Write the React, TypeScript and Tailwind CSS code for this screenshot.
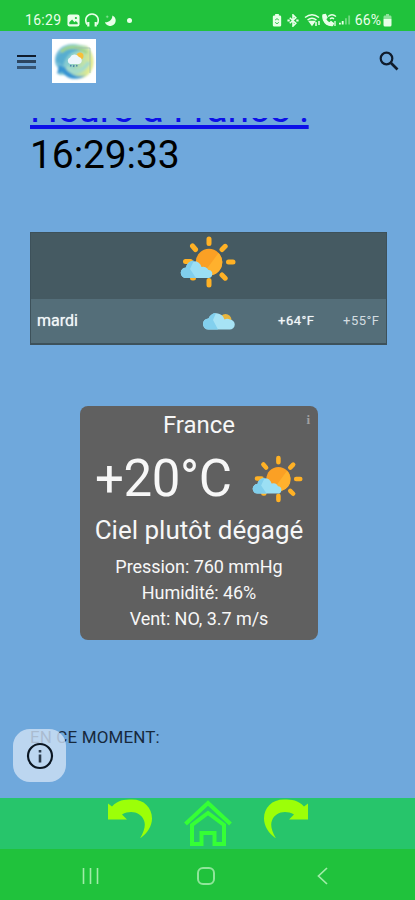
import type { ReactNode } from 'react'

interface IconProps {
  className?: string
}

export default function App() {
  return (
    <div className="flex flex-col w-[415px] h-[900px] overflow-hidden bg-[#6fa8dc] font-['Roboto',sans-serif] text-black">
      <StatusBar />
      <AppHeader />
      <main className="relative h-[680px] shrink-0 overflow-hidden">
        <div className="-mt-[32px] pl-[30px] text-[39px] leading-[46px] whitespace-nowrap">
          <h1 className="w-[280px] tracking-[-0.12px] text-[#0c10e8] underline decoration-[4px] underline-offset-[3px]">
            Heure à France :
          </h1>
          <p className="tracking-[-0.1px]">16:29:33</p>
        </div>
        <ForecastTable />
        <CurrentWeather />
        <p className="mt-[86px] ml-[30px] text-[17px] leading-[22px] tracking-[0.12px] text-[#17293c]">
          EN CE MOMENT:
        </p>
        <button
          className="absolute left-[13px] top-[611px] flex size-[53px] items-center justify-center rounded-[17px] bg-[#cfe1f5]/80"
          aria-label="Info"
        >
          <svg viewBox="0 0 28 28" className="size-[28px]" fill="none" stroke="#0b1622" strokeWidth="2.2">
            <circle cx="14" cy="14" r="12" />
            <path d="M14 12.5v8M14 8v2.4" strokeWidth="2.6" stroke="#2b3b4c" />
          </svg>
        </button>
      </main>
      <Toolbar />
      <SystemNav />
    </div>
  )
}

// ─── Top bars ───────────────────────────────────────────

function StatusBar() {
  return (
    <div className="flex h-[31px] shrink-0 items-center bg-[#20c23c] pt-[9px] pl-[25px] pr-[23px] text-[14px] leading-[22px] text-[#e9ffe9]">
      <span className="w-[42px] tracking-[0.3px]">16:29</span>
      <svg viewBox="0 0 14 14" className="size-[13px]">
        <rect x="0.5" y="0.5" width="13" height="13" rx="2.5" fill="#e9ffe9" />
        <path d="M2.5 11V9l3-3 2.5 3 1.5-1.5 2 2V11z" fill="#20c23c" />
        <circle cx="9.6" cy="4.3" r="1.2" fill="#20c23c" />
      </svg>
      <svg viewBox="0 0 14 14" className="ml-[5px] size-[14px]" fill="none" stroke="#e9ffe9" strokeWidth="1.6">
        <path d="M2 11.5C-1 6 2 1 7 1s8 5 5 10.5" />
        <path d="M3.3 9v4.5M10.7 9v4.5" strokeWidth="2.2" />
      </svg>
      <svg viewBox="0 0 13 13" className="ml-[5px] size-[12px]">
        <path d="M9 1.5a6 6 0 1 1-8 7.500C5 9.500 9.500 6 9 1.5z" fill="#e9ffe9" />
        <path d="M3.5 1.500v3M2 3h3" stroke="#e9ffe9" strokeOpacity="0.4" />
      </svg>
      <span className="ml-[11px] size-[5px] rounded-full bg-[#e9ffe9]" />

      <div className="ml-auto flex items-center">
        <svg viewBox="0 0 10 14" className="h-[13px] w-[10px]">
          <path d="M3 0h4v1.5h1Q9.5 1.5 9.5 3v9Q9.5 13.5 8 13.5H2Q.5 13.5.5 12V3Q.5 1.5 2 1.5h1z" fill="#e9ffe9" />
          <path d="M3 6.500l2-1.500 2 1.500M3 9l2 1.500L7 9" stroke="#20c23c" fill="none" />
        </svg>
        <svg viewBox="0 0 12 14" className="ml-[5px] h-[13px] w-[12px]" fill="none" stroke="#e9ffe9" strokeWidth="1.7">
          <path d="M2.5 4l6.500 6-3 3V1l3 3-6.500 6" />
          <path d="M0 7h2.500M9.500 7h2.500" strokeWidth="2.200" />
        </svg>
        <svg viewBox="0 0 17 14" className="ml-[5px] h-[14px] w-[17px]" fill="none" stroke="#e9ffe9" strokeWidth="1.5">
          <path d="M1 4.500Q8 -1 15 4.500M3.500 7Q8 3.500 12.500 7" />
          <path d="M5.500 8.500h5L8 12z" fill="#e9ffe9" />
          <path d="M12 9v4M15 8v4" />
        </svg>
        <svg viewBox="0 0 15 14" className="ml-[1px] h-[14px] w-[15px]" fill="none" stroke="#e9ffe9" strokeWidth="1.3">
          <path d="M1 2l2.500-.5L5 4.500 3.500 6q1.500 3 4 4l1.500-1.500 2.500 2-1 2Q4 13 1.500 7 .5 4 1 2z" fill="#e9ffe9" />
          <path d="M6 3.500Q10 0 14 3.500M8 6q2-2 4 0M13 8v5" />
        </svg>
        <svg viewBox="0 0 13 12" className="ml-[2px] h-[12px] w-[12px]" fill="#e9ffe9">
          <path d="M0 9h2v2H0zM3 7h2v4H3z" />
          <path d="M6.500 4h2v7h-2zM10 1h2v10h-2z" fillOpacity="0.4" />
        </svg>
        <span className="ml-[4px] tracking-[0.1px]">66%</span>
        <svg viewBox="0 0 9 13" className="ml-[2px] h-[13px] w-[9px]">
          <path d="M3 0h3v1.500h1.500Q8.500 1.500 8.500 3v2H.5V3Q.5 1.500 1.500 1.500H3z" fill="#e9ffe9" fillOpacity="0.55" />
          <path d="M.5 5h8v6q0 1.500-1.500 1.500H2Q.5 12.500.5 11z" fill="#e9ffe9" />
        </svg>
      </div>
    </div>
  )
}

function AppHeader() {
  return (
    <header className="flex h-[87px] shrink-0 items-start pt-[8px] pl-[17px] pr-[16px]">
      <button className="mt-[15px] flex w-[19px] flex-col gap-[3px] pt-px" aria-label="Menu">
        <span className="h-[2px] bg-[#101c2c]" />
        <span className="h-[3px] bg-[#2c4560]" />
        <span className="h-[3px] bg-[#365473]" />
      </button>
      <Logo className="ml-[16px] size-[44px]" />
      <svg viewBox="0 0 20 20" className="mt-[12px] ml-auto size-[20px]" fill="none" stroke="#101c2c">
        <circle cx="7.5" cy="7.5" r="5.800" strokeWidth="2.200" />
        <path d="M12 12l6.500 6.500" strokeWidth="2.600" />
      </svg>
    </header>
  )
}

function Logo({ className }: IconProps) {
  return (
    <svg viewBox="0 0 44 44" className={className}>
      <defs>
        <linearGradient id="swirl" x1="0" y1="0" x2="1" y2="0.2">
          <stop offset="0" stopColor="#4aa5d8" />
          <stop offset="0.5" stopColor="#79c9c4" />
          <stop offset="1" stopColor="#dce77c" />
        </linearGradient>
        <filter id="soft" x="-10%" y="-10%" width="120%" height="120%">
          <feGaussianBlur stdDeviation="1" />
        </filter>
      </defs>
      <rect width="44" height="44" fill="#fff" />
      <g filter="url(#soft)">
        <path d="M3 21C3 11 12 4 23 5l12 2c7 7 9 19 3 27-6 7-16 7-24 2l-7 0-1-7C4 27 3 24 3 21z" fill="url(#swirl)" fillOpacity="0.85" />
        <path d="M4 22C6 12 18 5 33 13 23 10 14 14 11 27z" fill="#4fa9cf" fillOpacity="0.8" />
        <path d="M9 13C15 7 26 6 35 14" stroke="#a2d58a" strokeWidth="3" fill="none" />
        <path d="M5 35l2-9 7 3c5 8 13 10 20 7-8 6-18 5-24-3z" fill="#3794d2" />
        <path d="M15 28c5 7 15 6 22-5" stroke="#a5dccb" strokeWidth="4" fill="none" />
      </g>
      <path d="M22 9h16v25" fill="none" stroke="#9ebcaf" strokeWidth="0.7" />
      <circle cx="28" cy="17" r="3.500" fill="#f7bf38" />
      <path d="M18 25a3.500 3.500 0 0 1 0-6.500 5 5 0 0 1 9-.5 3.600 3.600 0 0 1 0 7z" fill="#edf6fc" />
      <path d="M19 26l-.5 1.500M22 26l-.5 2M25 26l-.5 1.500" stroke="#4a80a4" strokeWidth="1.400" />
    </svg>
  )
}

// ─── Weather ────────────────────────────────────────────

function ForecastTable() {
  return (
    <section className="mt-[54px] ml-[30px] h-[113px] w-[357px] border border-[#3d515a] border-b-2 bg-[#455a62] text-[#f2f7f8]">
      <div className="flex h-[66px] items-center justify-center">
        <PartlySunny className="-mt-[8px] -ml-[2px] h-[52px] w-[56px]" />
      </div>
      <div className="grid h-[44px] grid-cols-[172px_69px_65px_1fr] items-center bg-[#546e79] pl-[6px] text-[13px]">
        <span className="text-[16px] [text-shadow:0_0_1px_#cfdcdf]">mardi</span>
        <MostlyCloudy className="ml-[-6px] h-[18px] w-[32px]" />
        <span className="tracking-[0.5px] [text-shadow:0_0_1px_#cfdcdf]">+64°F</span>
        <span className="tracking-[0.5px] text-[#d3dde1]">+55°F</span>
      </div>
    </section>
  )
}

function CurrentWeather() {
  return (
    <section className="mt-[61px] ml-[80px] flex h-[234px] w-[238px] flex-col rounded-[8px] bg-[#606060] text-center text-[#f7f7f7]">
      <div className="relative h-[38px] text-[24px] leading-[38px]">
        France
        <span className="absolute right-[8px] top-[6px] font-['Liberation_Serif',serif] text-[13px] leading-[16px] font-bold text-[#a0a0a0]">
          i
        </span>
      </div>
      <div className="flex h-[70px] items-center justify-between pl-[15px] pr-[15px]">
        <span className="text-[51px] leading-[70px] tracking-[-0.4px]">+20°C</span>
        <PartlySunny className="h-[48px] w-[51px]" />
      </div>
      <p className="h-[40px] text-[26px] leading-[32px] whitespace-nowrap">Ciel plutôt dégagé</p>
      <div className="text-[18px] leading-[26px]">
        <Detail>Pression: 760 mmHg</Detail>
        <Detail>Humidité: 46%</Detail>
        <Detail>Vent: NO, 3.7 m/s</Detail>
      </div>
    </section>
  )
}

function Detail({ children }: { children: ReactNode }) {
  return <p className="whitespace-nowrap tracking-[-0.05px]">{children}</p>
}

function PartlySunny({ className }: IconProps) {
  return (
    <svg viewBox="0 0 56 52" className={className}>
      <g stroke="#ffb125" strokeWidth="5" strokeLinecap="round">
        <path d="M29 3v4.500M29 44.500v4.500M48.500 26H53M42 13.500l3.200-3.200M42 39l3.200 3.200M15.500 13.500l-3-3.500M5.500 25.500h5M12.500 42h1" />
      </g>
      <circle cx="29" cy="26" r="13.200" fill="#fba024" />
      <path d="M23 38A13.200 13.200 0 0 0 38.500 17z" fill="#ffb12d" />
      <path d="M6 42a5 5 0 0 1 0-10.500 8 8 0 0 1 15.500-.5 5.600 5.600 0 0 1 7 3A4 4 0 0 1 28 42z" fill="#9bdff4" />
      <path d="M6 42a5 5 0 0 1 0-10.500 8 8 0 0 1 8-7L10 33l6 9z" fill="#80ceec" />
    </svg>
  )
}

function MostlyCloudy({ className }: IconProps) {
  return (
    <svg viewBox="0 0 32 18" className={className}>
      <circle cx="22.500" cy="8" r="6" fill="#e9b63d" />
      <path d="M5.500 17.500A5.500 5.500 0 0 1 5.500 6.500 8.500 8.500 0 0 1 20 4.500l1.500 3a6 6 0 0 1 5.500 0 5 5 0 0 1-.5 10z" fill="#a7e3f5" />
      <path d="M5.500 17.500A5.500 5.500 0 0 1 5.500 6.500Q8 1 13 1L10 8l5 9.500z" fill="#82d0ee" />
    </svg>
  )
}

// ─── Bottom bars ────────────────────────────────────────

function Toolbar() {
  return (
    <nav className="flex h-[51px] shrink-0 items-start justify-center gap-[32px] bg-[#27c56b] pt-[1px]">
      <UndoArrow className="h-[39px] w-[44px]" />
      <svg viewBox="0 0 48 48" className="h-[48px] w-[48px]" fill="none" stroke="#35ff35" strokeWidth="4">
        <path d="M1.500 25L24 4l22.500 21" />
        <path d="M8 45V26L24 14l16 12v19H30.500V34h-13v11z" />
      </svg>
      <UndoArrow className="h-[39px] w-[44px] -scale-x-100" />
    </nav>
  )
}

function UndoArrow({ className }: IconProps) {
  return (
    <svg viewBox="0 0 44 39" className={className}>
      <path d="M0 4.500l4 3C10 1 16 .5 24 .5c12 0 20 8 20 19 0 8-5 15-12 20 4-7 6-13 4-18-3-8-13-11-22-6l5 5H0z" fill="#9cff08" />
    </svg>
  )
}

function SystemNav() {
  return (
    <div className="flex h-[51px] shrink-0 items-center bg-[#20c23c] pt-[3px] pl-[82px]">
      <svg viewBox="0 0 18 18" className="size-[18px]" stroke="#a0eca8" strokeWidth="1.600">
        <path d="M1.500 1v16M8.500 1v16M15.500 1v16" />
      </svg>
      <span className="ml-[97px] size-[18px] rounded-[6px] border-2 border-[#8fe59a]" />
      <svg viewBox="0 0 11 18" className="ml-[102px] h-[18px] w-[11px]" fill="none" stroke="#a0eca8" strokeWidth="1.700">
        <path d="M10 1L1.500 9l8.500 8" />
      </svg>
    </div>
  )
}
